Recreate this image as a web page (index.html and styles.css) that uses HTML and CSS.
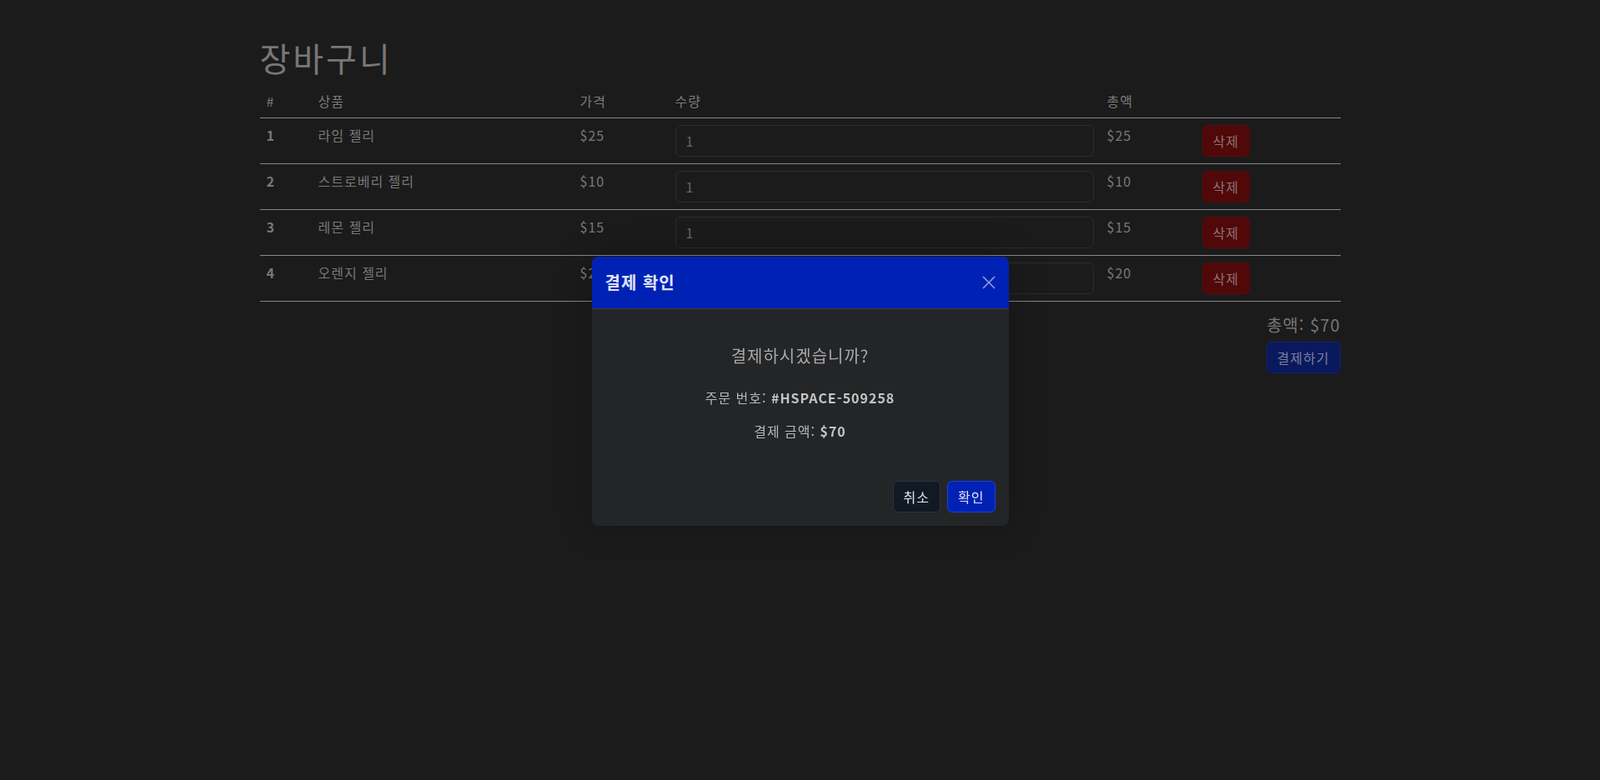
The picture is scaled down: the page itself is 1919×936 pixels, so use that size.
FILE: index.html
```html
<!DOCTYPE html>
<html lang="ko">
<head>
    <meta charset="UTF-8">
    <meta name="viewport" content="width=device-width, initial-scale=1.0">
    <title>장바구니</title>
    <link rel="stylesheet" href="styles.css">
</head>
<body>
    <div class="container">
        <h1>장바구니</h1>
        <table class="cart">
            <thead>
                <tr>
                    <th class="col-no">#</th>
                    <th class="col-name">상품</th>
                    <th class="col-price">가격</th>
                    <th class="col-qty">수량</th>
                    <th class="col-sum">총액</th>
                    <th class="col-act"></th>
                </tr>
            </thead>
            <tbody>
                <tr>
                    <td class="no">1</td>
                    <td>라임 젤리</td>
                    <td>$25</td>
                    <td><input class="qty" type="number" value="1"></td>
                    <td>$25</td>
                    <td><button class="btn btn-del">삭제</button></td>
                </tr>
                <tr>
                    <td class="no">2</td>
                    <td>스트로베리 젤리</td>
                    <td>$10</td>
                    <td><input class="qty" type="number" value="1"></td>
                    <td>$10</td>
                    <td><button class="btn btn-del">삭제</button></td>
                </tr>
                <tr>
                    <td class="no">3</td>
                    <td>레몬 젤리</td>
                    <td>$15</td>
                    <td><input class="qty" type="number" value="1"></td>
                    <td>$15</td>
                    <td><button class="btn btn-del">삭제</button></td>
                </tr>
                <tr>
                    <td class="no">4</td>
                    <td>오렌지 젤리</td>
                    <td>$20</td>
                    <td><input class="qty" type="number" value="1"></td>
                    <td>$20</td>
                    <td><button class="btn btn-del">삭제</button></td>
                </tr>
            </tbody>
        </table>
        <div class="summary">
            <h5 class="total">총액: $70</h5>
            <button class="btn btn-pay">결제하기</button>
        </div>
    </div>

    <!-- 결제 확인 모달 -->
    <div class="modal">
        <div class="modal-dialog">
            <div class="modal-header">
                <h5 class="modal-title">결제 확인</h5>
                <button class="btn-close" aria-label="닫기">
                    <svg width="16" height="16" viewBox="0 0 16 16">
                        <path d="M1 1L15 15M15 1L1 15" stroke="currentColor" stroke-width="1.6" fill="none"/>
                    </svg>
                </button>
            </div>
            <div class="modal-body">
                <h5 class="question">결제하시겠습니까?</h5>
                <p>주문 번호: <strong>#HSPACE-509258</strong></p>
                <p>결제 금액: <strong>$70</strong></p>
            </div>
            <div class="modal-footer">
                <button class="btn btn-cancel">취소</button>
                <button class="btn btn-ok">확인</button>
            </div>
        </div>
    </div>
</body>
</html>
```

FILE: styles.css
```css
body {
    margin: 0;
    font-family: "Noto Sans CJK KR", "Noto Sans", sans-serif;
    font-size: 16px;
    line-height: 1.5;
    letter-spacing: 1px;
    background-color: #1b1b1b;
    color: #7a7a7a;
}
.container {
    width: 1296px;
    margin: 45px auto 0;
}
h1 {
    margin: 0 0 8px;
    font-size: 40px;
    font-weight: 400;
    line-height: 1.2;
    letter-spacing: 3px;
    color: #777;
}
.cart {
    width: 100%;
    table-layout: fixed;
    border-collapse: collapse;
    margin-bottom: 16px;
}
.cart th,
.cart td {
    box-sizing: border-box;
    padding: 8px;
    text-align: left;
    vertical-align: top;
    border-bottom: 1px solid #888;
}
.cart th {
    font-weight: 400;
    color: #7a7a7a;
}
.col-no { width: 62px; }
.col-name { width: 314px; }
.col-price { width: 114px; }
.col-qty { width: 518px; }
.col-sum { width: 114px; }
.col-act { width: 174px; }
.cart td {
    color: #787878;
}
.cart td.no {
    font-weight: 700;
}
.qty {
    box-sizing: border-box;
    width: 100%;
    height: 38px;
    padding: 6px 12px;
    font: inherit;
    color: #666;
    background-color: #1b1b1b;
    border: 1px solid #2c2c2c;
    border-radius: 6px;
    outline: none;
    -moz-appearance: textfield;
}
.qty::-webkit-inner-spin-button,
.qty::-webkit-outer-spin-button {
    -webkit-appearance: none;
    margin: 0;
}
.btn {
    box-sizing: border-box;
    height: 38px;
    padding: 0 12px;
    font-family: inherit;
    font-size: 16px;
    line-height: 36px;
    letter-spacing: 1px;
    border: 1px solid transparent;
    border-radius: 6px;
    cursor: pointer;
}
.btn-del {
    background-color: #500809;
    border-color: #5a0a0c;
    color: #8c7474;
}
.summary {
    text-align: right;
}
.total {
    margin: 0 0 8px;
    font-size: 20px;
    font-weight: 400;
    line-height: 1.2;
    color: #777;
}
.btn-pay {
    background-color: #0a195e;
    border-color: #0e2272;
    color: #7c8099;
}
.modal {
    position: fixed;
    top: 0;
    left: 0;
    right: 0;
    bottom: 0;
    display: flex;
    align-items: center;
    justify-content: center;
}
.modal-dialog {
    width: 500px;
    margin-top: 2px;
    background-color: #242527;
    border-radius: 8px;
    overflow: hidden;
    box-shadow: 0 0 40px rgba(0, 0, 0, 0.25);
}
.modal-header {
    display: flex;
    align-items: center;
    justify-content: space-between;
    padding: 16px;
    background-color: #0022b4;
    border-bottom: 1px solid #3a3c42;
}
.modal-title {
    margin: 0;
    font-size: 20px;
    line-height: 1.5;
    font-weight: 700;
    color: #dfe3f3;
}
.btn-close {
    display: flex;
    padding: 0;
    background: none;
    border: none;
    color: #8e9ce0;
    cursor: pointer;
}
.modal-body {
    padding: 44px 16px 16px;
    text-align: center;
    color: #b6b6b6;
}
.question {
    margin: 0 0 26px;
    font-size: 20px;
    font-weight: 400;
    line-height: 1.2;
    color: #a9a9a9;
}
.modal-body p {
    margin: 0 0 16px;
}
.modal-body strong {
    color: #c4c4c4;
}
.modal-footer {
    display: flex;
    justify-content: flex-end;
    gap: 8px;
    padding: 16px;
}
.btn-cancel {
    background-color: #111a24;
    border-color: #2d3139;
    color: #e1e5ea;
}
.btn-ok {
    background-color: #0022b4;
    border-color: #1b40e0;
    color: #e0e4f6;
}
```
